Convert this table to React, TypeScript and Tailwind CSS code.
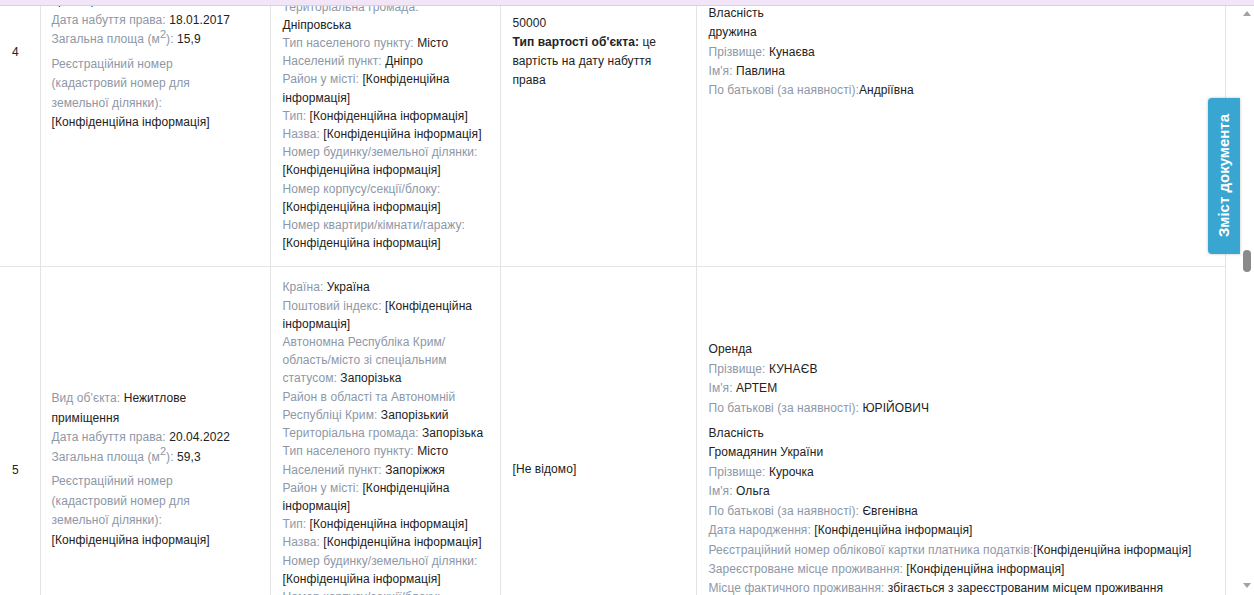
import React from "react";

const L = ({ children }: { children: React.ReactNode }) => (
  <span className="text-[#8d97a7]">{children}</span>
);

const Conf = "[Конфіденційна інформація]";

function Col1({ kind, date, area }: { kind: string; date: string; area: string }) {
  return (
    <div className="w-[190px] leading-[19.5px] mb-[6px]">
      <div>
        <L>Вид об'єкта: </L>
        {kind}
      </div>
      <div>
        <L>Дата набуття права: </L>
        {date}
      </div>
      <div>
        <L>
          Загальна площа (м<sup className="text-[11px]">2</sup>):{" "}
        </L>
        {area}
      </div>
      <div className="mt-[5px]">
        <L>Реєстраційний номер (кадастровий номер для земельної ділянки):</L>
        <div>{Conf}</div>
      </div>
    </div>
  );
}

type Pair = [string, string];

function Col2({ items }: { items: Pair[] }) {
  return (
    <div className="leading-[18.2px] mb-[6px]">
      {items.map(([l, v], i) => (
        <div key={i}>
          <L>{l} </L>
          {v}
        </div>
      ))}
    </div>
  );
}

function Group({ lines }: { lines: (string | Pair)[] }) {
  return (
    <div className="leading-[19.4px] mb-[6px]">
      {lines.map((x, i) =>
        typeof x === "string" ? (
          <div key={i}>{x}</div>
        ) : (
          <div key={i}>
            <L>{x[0]}</L>
            {x[1]}
          </div>
        )
      )}
    </div>
  );
}

const addr4: Pair[] = [
  ["Країна:", "Україна"],
  ["Поштовий індекс:", Conf],
  ["Автономна Республіка Крим/ область/місто зі спеціальним статусом:", "Дніпропетровська"],
  ["Район в області та Автономній Республіці Крим:", "Дніпровський"],
  ["Територіальна громада:", "Дніпровська"],
  ["Тип населеного пункту:", "Місто"],
  ["Населений пункт:", "Дніпро"],
  ["Район у місті:", Conf],
  ["Тип:", Conf],
  ["Назва:", Conf],
  ["Номер будинку/земельної ділянки:", Conf],
  ["Номер корпусу/секції/блоку:", Conf],
  ["Номер квартири/кімнати/гаражу:", Conf],
];

const addr5: Pair[] = [
  ["Країна:", "Україна"],
  ["Поштовий індекс:", Conf],
  ["Автономна Республіка Крим/ область/місто зі спеціальним статусом:", "Запорізька"],
  ["Район в області та Автономній Республіці Крим:", "Запорізький"],
  ["Територіальна громада:", "Запорізька"],
  ["Тип населеного пункту:", "Місто"],
  ["Населений пункт:", "Запоріжжя"],
  ["Район у місті:", Conf],
  ["Тип:", Conf],
  ["Назва:", Conf],
  ["Номер будинку/земельної ділянки:", Conf],
  ["Номер корпусу/секції/блоку:", Conf],
  ["Номер квартири/кімнати/гаражу:", Conf],
];

const td = "border border-[#e4e4e4] align-middle px-3 pt-[11px] pb-[8px]";

export default function App() {
  return (
    <div className="w-[1254px] h-[595px] flex flex-col overflow-hidden bg-white font-['Liberation_Sans',Arial,sans-serif] text-[12px] tracking-[0.08px] text-[#222]">
      <div className="h-[6px] shrink-0 bg-[#f3e5f8] border-b border-[#dfcbe8]" />
      <div className="flex flex-1 min-h-0 relative">
        <div className="w-[1240px] overflow-hidden">
          <table className="table-fixed border-collapse w-[1225px] mt-[-166px] border-l-0">
            <colgroup>
              <col className="w-[40px]" />
              <col className="w-[230px]" />
              <col className="w-[230px]" />
              <col className="w-[196px]" />
              <col className="w-[529px]" />
            </colgroup>
            <tbody>
              <tr>
                <td className={td + " border-l-0"}>
                  <div className="mb-[6px]">4</div>
                </td>
                <td className={td + " pl-[11px]"}>
                  <Col1 kind="Нежитлове приміщення" date="18.01.2017" area="15,9" />
                </td>
                <td className={td}>
                  <Col2 items={addr4} />
                </td>
                <td className={td}>
                  <div className="leading-[19px] mb-[6px]">
                    <div>50000</div>
                    <div>
                      <b>Тип вартості об'єкта:</b> це вартість на дату набуття права
                    </div>
                  </div>
                </td>
                <td className={td}>
                  <Group
                    lines={[
                      "Власність",
                      "дружина",
                      ["Прізвище: ", "Кунаєва"],
                      ["Ім'я: ", "Павлина"],
                      ["По батькові (за наявності):", "Андріївна"],
                    ]}
                  />
                </td>
              </tr>
              <tr>
                <td className={td + " border-l-0"}>
                  <div className="mb-[6px]">5</div>
                </td>
                <td className={td + " pl-[11px]"}>
                  <Col1 kind="Нежитлове приміщення" date="20.04.2022" area="59,3" />
                </td>
                <td className={td}>
                  <Col2 items={addr5} />
                </td>
                <td className={td}>
                  <div className="leading-[19px] mb-[6px]">[Не відомо]</div>
                </td>
                <td className={td}>
                  <Group
                    lines={[
                      "Оренда",
                      ["Прізвище: ", "КУНАЄВ"],
                      ["Ім'я: ", "АРТЕМ"],
                      ["По батькові (за наявності): ", "ЮРІЙОВИЧ"],
                    ]}
                  />
                  <Group
                    lines={[
                      "Власність",
                      "Громадянин України",
                      ["Прізвище: ", "Курочка"],
                      ["Ім'я: ", "Ольга"],
                      ["По батькові (за наявності): ", "Євгенівна"],
                      ["Дата народження: ", Conf],
                      ["Реєстраційний номер облікової картки платника податків:", Conf],
                      ["Зареєстроване місце проживання: ", Conf],
                      ["Місце фактичного проживання: ", "збігається з зареєстрованим місцем проживання"],
                    ]}
                  />
                </td>
              </tr>
            </tbody>
          </table>
        </div>

        {/* scrollbar */}
        <div className="w-[14px] shrink-0 bg-white flex flex-col items-center">
          <svg width="8" height="5" viewBox="0 0 8 5" className="mt-[5px]">
            <path d="M0 5 L4 0 L8 5 Z" fill="#a3a3a3" />
          </svg>
          <div className="mt-[234px] w-[8px] h-[22px] rounded-full bg-[#8a8a8a]" />
          <div className="flex-1" />
          <svg width="8" height="5" viewBox="0 0 8 5" className="mb-[7px]">
            <path d="M0 0 L8 0 L4 5 Z" fill="#a3a3a3" />
          </svg>
        </div>

        {/* side tab */}
        <div className="absolute right-[14px] top-[92px] w-[32px] h-[156px] rounded-l-[4px] bg-[#39a6d2] shadow-[0_0_3px_rgba(0,0,0,0.25)] flex items-center justify-center">
          <span className="[writing-mode:vertical-rl] rotate-180 text-white font-bold text-[15px] tracking-normal whitespace-nowrap font-['Liberation_Sans',Arial,sans-serif]">
            Зміст документа
          </span>
        </div>
      </div>
    </div>
  );
}
